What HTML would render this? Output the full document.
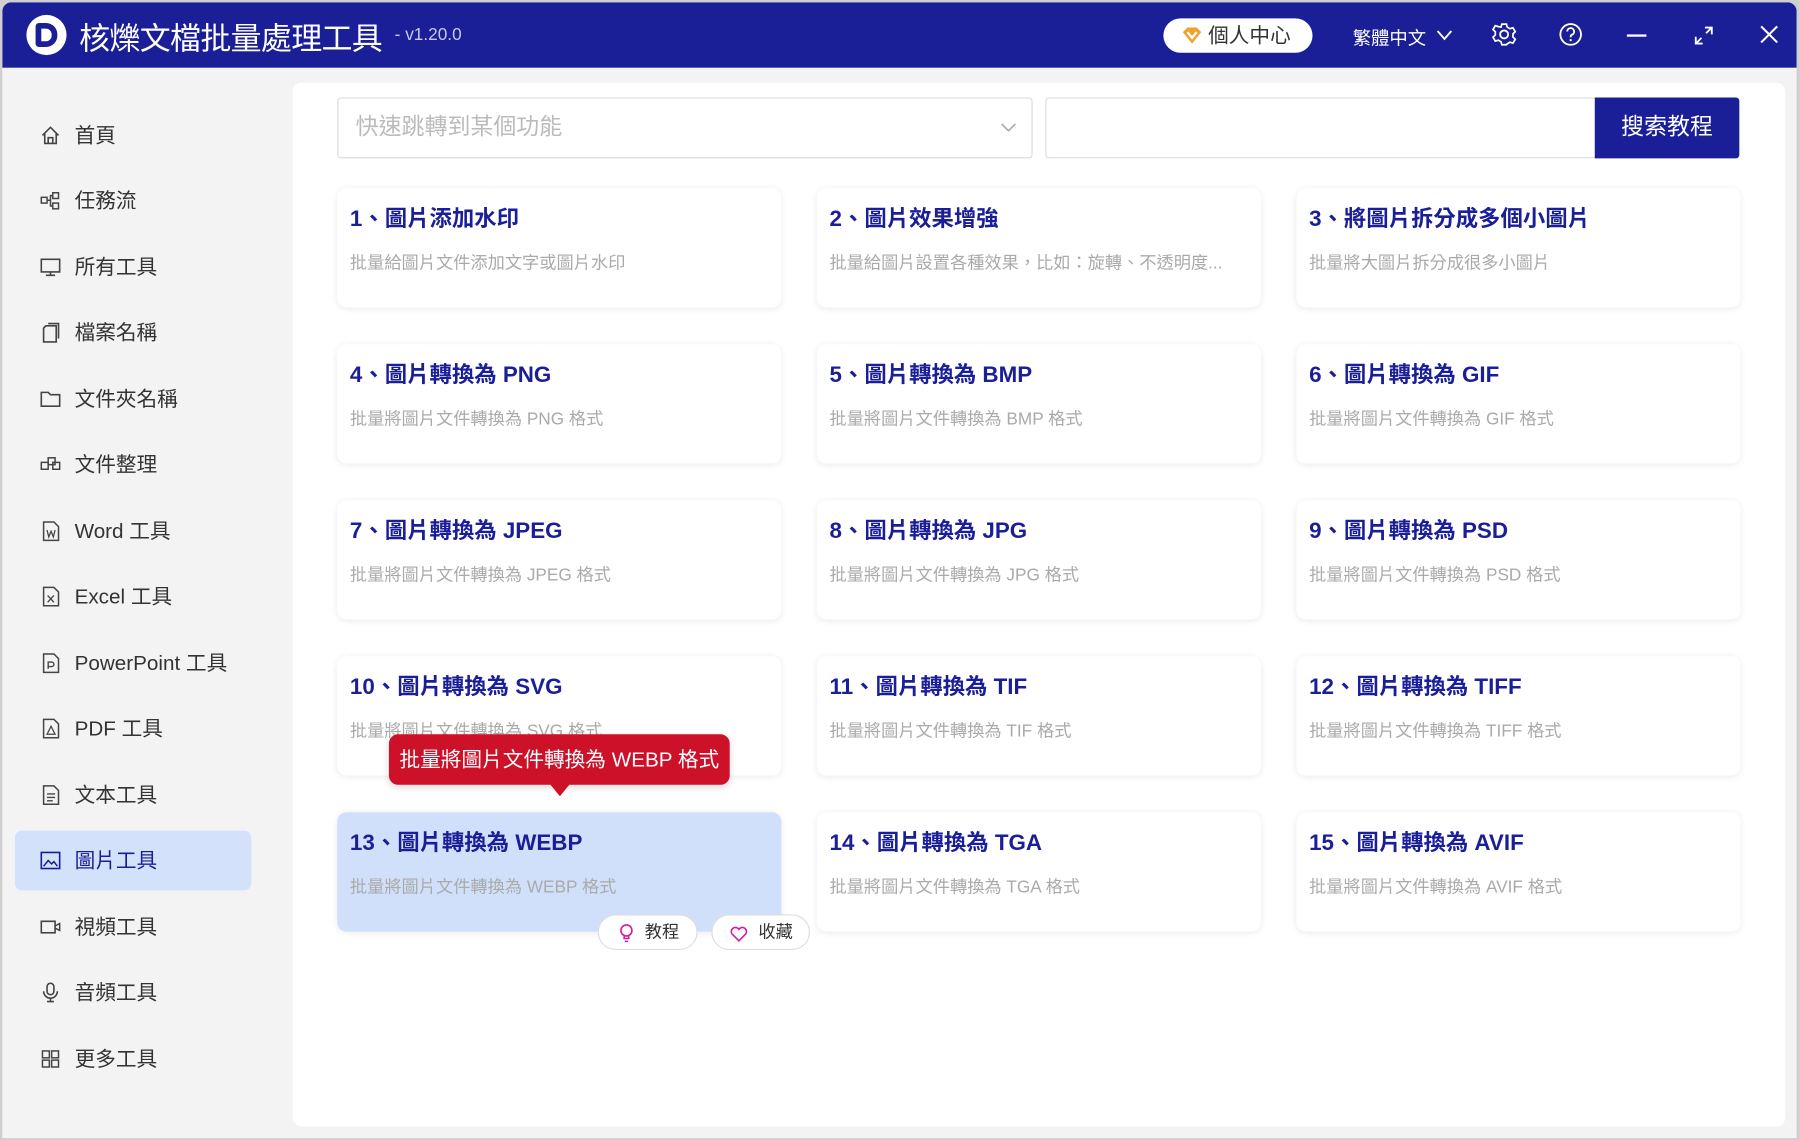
<!DOCTYPE html>
<html><head><meta charset="utf-8"><style>
*{margin:0;padding:0;box-sizing:border-box}
html,body{width:1799px;height:1140px;overflow:hidden;background:#6b6b6b}
#s{position:absolute;left:0;top:0;width:1568px;height:994px;transform:scale(1.14732);transform-origin:0 0;font-family:"Liberation Sans","Noto Sans CJK TC",sans-serif;background:#cfcfcf}
.win{position:absolute;left:2px;top:2px;width:1564px;height:990px;background:#f3f3f3;border-radius:8px 8px 0 0;overflow:hidden}
.hdr{position:absolute;left:0;top:0;width:100%;height:57px;background:#1a1e97;color:#fff}
.abs{position:absolute}
.side{position:absolute;left:0;top:57px;width:253px;bottom:0}
.it{position:absolute;left:11px;width:206px;height:52px;border-radius:6px;font-size:18px;color:#333;line-height:52px;padding-left:52px}
.it svg{position:absolute;left:22px;top:17px}
.it.on{background:#d3e1fa;color:#1a1e97}
.main{position:absolute;left:253px;top:70px;width:1301px;height:910px;background:#fff;border-radius:8px}
.card{position:absolute;width:387px;height:104px;background:#fff;border-radius:8px;box-shadow:0 1px 6px rgba(0,0,0,.08)}
.card b{position:absolute;left:11px;top:10px;font-size:19.5px;color:#1a1e97;font-weight:bold;white-space:nowrap}
.card p{position:absolute;left:11px;top:54px;font-size:15px;color:#aaa;white-space:nowrap}
.pill{position:absolute;height:31px;border:1px solid #ddd;border-radius:16px;background:#fff;font-size:15px;color:#333;line-height:29px}
</style></head><body><div id="s"><div class="win">
<div class="hdr">
 <div class="abs" style="left:21px;top:11px;width:35px;height:35px;border-radius:50%;background:#fff"></div>
 <div class="abs" style="left:29px;top:18px;width:19px;height:21px;border:5px solid #1a1e97;border-radius:3px 10px 10px 3px"></div>
 <div class="abs" style="left:67px;top:10px;font-size:27px;white-space:nowrap;letter-spacing:-0.6px">核爍文檔批量處理工具</div>
 <div class="abs" style="left:342px;top:20px;font-size:15px;color:#c8cae8">- v1.20.0</div>
 <div class="abs" style="left:1012px;top:14px;width:130px;height:30px;background:#fff;border-radius:15px;color:#333;font-size:18px;line-height:30px;padding-left:39px">個人中心</div>
 <svg class="abs" style="left:1028px;top:21px" width="18" height="16" viewBox="0 0 18 16"><path d="M1 5L5 1H13L17 5L9 15Z" fill="#f2a12a"/><path d="M5 5L9 10L13 5" stroke="#fff" stroke-width="2" fill="none"/></svg>
 <div class="abs" style="left:1177px;top:18px;font-size:16px">繁體中文</div>
 <svg class="abs" style="left:1250px;top:24px" width="14" height="10"><path d="M1 1L7 8L13 1" stroke="#fff" stroke-width="1.6" fill="none"/></svg>
 <svg class="abs" style="left:1298px;top:17px" width="22" height="22" viewBox="0 0 22 22"><circle cx="11" cy="11" r="3.5" stroke="#fff" stroke-width="1.6" fill="none"/><path d="M9 2h4l.7 2.6 2.4 1.4 2.6-.8 2 3.4-2 1.9v2.8l2 1.9-2 3.4-2.6-.8-2.4 1.4L13 20H9l-.7-2.6-2.4-1.4-2.6.8-2-3.4 2-1.9V8.7l-2-1.9 2-3.4 2.6.8L8.3 4.6Z" stroke="#fff" stroke-width="1.5" fill="none"/></svg>
 <svg class="abs" style="left:1356px;top:17px" width="22" height="22"><circle cx="11" cy="11" r="9" stroke="#fff" stroke-width="1.6" fill="none"/><path d="M8 8.5a3 3 0 1 1 4 2.8c-1 .4-1 1-1 2.2" stroke="#fff" stroke-width="1.6" fill="none"/><circle cx="11" cy="16" r="1" fill="#fff"/></svg>
 <div class="abs" style="left:1416px;top:28px;width:17px;height:2px;background:#fff"></div>
 <svg class="abs" style="left:1474px;top:20px" width="18" height="18"><path d="M10 2h6v6M16 2l-5 5M8 16H2v-6M2 16l5-5" stroke="#fff" stroke-width="1.6" fill="none"/></svg>
 <svg class="abs" style="left:1531px;top:19px" width="18" height="18"><path d="M2 2L16 16M16 2L2 16" stroke="#fff" stroke-width="1.8"/></svg>
</div>
<div class="side">
 <div class="it" style="top:33px"><svg width="18" height="18"><path d="M2 9L9 2L16 9M4 7V16H14V7M7 16V11H11V16" stroke="#444" stroke-width="1.4" fill="none"/></svg>首頁</div>
 <div class="it" style="top:90px"><svg width="18" height="18"><rect x="1" y="6" width="5" height="5" stroke="#444" fill="none" stroke-width="1.3"/><rect x="11" y="2" width="5" height="5" stroke="#444" fill="none" stroke-width="1.3"/><rect x="11" y="11" width="5" height="5" stroke="#444" fill="none" stroke-width="1.3"/><path d="M6 8.5H9V4.5H11M9 8.5V13.5H11" stroke="#444" fill="none" stroke-width="1.3"/></svg>任務流</div>
 <div class="it" style="top:148px"><svg width="18" height="18"><rect x="1" y="2" width="16" height="11" stroke="#444" fill="none" stroke-width="1.4"/><path d="M5 16H13M9 13V16" stroke="#444" stroke-width="1.4"/></svg>所有工具</div>
 <div class="it" style="top:205px"><svg width="18" height="18"><path d="M5 3H14V17H3V5ZM7 1H16V14" stroke="#444" fill="none" stroke-width="1.4"/></svg>檔案名稱</div>
 <div class="it" style="top:263px"><svg width="18" height="18"><path d="M1 3H7L9 5H17V15H1Z" stroke="#444" fill="none" stroke-width="1.4"/></svg>文件夾名稱</div>
 <div class="it" style="top:320px"><svg width="18" height="18"><rect x="1" y="7" width="6" height="6" stroke="#444" fill="none" stroke-width="1.3"/><rect x="7" y="3" width="6" height="6" stroke="#444" fill="none" stroke-width="1.3"/><rect x="11" y="7" width="6" height="6" stroke="#444" fill="none" stroke-width="1.3"/></svg>文件整理</div>
 <div class="it" style="top:378px"><svg width="18" height="18"><path d="M3 1H12L16 5V17H3Z" stroke="#444" fill="none" stroke-width="1.3"/><path d="M6 8L7.5 14L9.5 9L11.5 14L13 8" stroke="#444" fill="none" stroke-width="1.1"/></svg>Word 工具</div>
 <div class="it" style="top:435px"><svg width="18" height="18"><path d="M3 1H12L16 5V17H3Z" stroke="#444" fill="none" stroke-width="1.3"/><path d="M6.5 8L12 14M12 8L6.5 14" stroke="#444" stroke-width="1.2"/></svg>Excel 工具</div>
 <div class="it" style="top:493px"><svg width="18" height="18"><path d="M3 1H12L16 5V17H3Z" stroke="#444" fill="none" stroke-width="1.3"/><path d="M7 14V8H10a2 2 0 0 1 0 4H7" stroke="#444" fill="none" stroke-width="1.2"/></svg>PowerPoint 工具</div>
 <div class="it" style="top:550px"><svg width="18" height="18"><path d="M3 1H12L16 5V17H3Z" stroke="#444" fill="none" stroke-width="1.3"/><path d="M6 14L9.5 7L13 14Z" stroke="#444" fill="none" stroke-width="1.1"/></svg>PDF 工具</div>
 <div class="it" style="top:608px"><svg width="18" height="18"><path d="M3 1H12L16 5V17H3Z" stroke="#444" fill="none" stroke-width="1.3"/><path d="M6 8H13M6 11H13M6 14H11" stroke="#444" stroke-width="1.2"/></svg>文本工具</div>
 <div class="it on" style="top:665px"><svg width="18" height="18"><rect x="1" y="2" width="16" height="14" stroke="#1a1e97" fill="none" stroke-width="1.4"/><path d="M3 14L7 9L10 12L12 10L15 14" stroke="#1a1e97" fill="none" stroke-width="1.3"/></svg>圖片工具</div>
 <div class="it" style="top:723px"><svg width="18" height="18"><rect x="1" y="4" width="12" height="10" stroke="#444" fill="none" stroke-width="1.4"/><path d="M13 8L17 6V12L13 10" stroke="#444" fill="none" stroke-width="1.3"/></svg>視頻工具</div>
 <div class="it" style="top:780px"><svg width="18" height="18"><rect x="6" y="1" width="6" height="10" rx="3" stroke="#444" fill="none" stroke-width="1.4"/><path d="M3 8a6 6 0 0 0 12 0M9 14V17M6 17H12" stroke="#444" fill="none" stroke-width="1.4"/></svg>音頻工具</div>
 <div class="it" style="top:838px"><svg width="18" height="18"><rect x="2" y="2" width="6" height="6" stroke="#444" fill="none" stroke-width="1.3"/><rect x="10" y="2" width="6" height="6" stroke="#444" fill="none" stroke-width="1.3"/><rect x="2" y="10" width="6" height="6" stroke="#444" fill="none" stroke-width="1.3"/><rect x="10" y="10" width="6" height="6" stroke="#444" fill="none" stroke-width="1.3"/></svg>更多工具</div>
</div>
<div class="main">
 <div class="abs" style="left:39px;top:13px;width:606px;height:53px;border:1px solid #dcdcdc;border-radius:3px;font-size:20px;color:#bbb;line-height:51px;padding-left:15px">快速跳轉到某個功能</div>
 <svg class="abs" style="left:617px;top:35px" width="14" height="9"><path d="M1 1L7 7L13 1" stroke="#aaa" stroke-width="1.4" fill="none"/></svg>
 <div class="abs" style="left:656px;top:13px;width:480px;height:53px;border:1px solid #dcdcdc;border-right:none;border-radius:3px 0 0 3px"></div>
 <div class="abs" style="left:1135px;top:13px;width:126px;height:53px;background:#1a1e97;border-radius:0 3px 3px 0;color:#fff;font-size:20px;line-height:53px;text-align:center">搜索教程</div>

 <div class="card" style="left:39px;top:92px"><b>1、圖片添加水印</b><p>批量給圖片文件添加文字或圖片水印</p></div>
 <div class="card" style="left:457px;top:92px"><b>2、圖片效果增強</b><p>批量給圖片設置各種效果，比如：旋轉、不透明度...</p></div>
 <div class="card" style="left:875px;top:92px"><b>3、將圖片拆分成多個小圖片</b><p>批量將大圖片拆分成很多小圖片</p></div>
 <div class="card" style="left:39px;top:228px"><b>4、圖片轉換為 PNG</b><p>批量將圖片文件轉換為 PNG 格式</p></div>
 <div class="card" style="left:457px;top:228px"><b>5、圖片轉換為 BMP</b><p>批量將圖片文件轉換為 BMP 格式</p></div>
 <div class="card" style="left:875px;top:228px"><b>6、圖片轉換為 GIF</b><p>批量將圖片文件轉換為 GIF 格式</p></div>
 <div class="card" style="left:39px;top:364px"><b>7、圖片轉換為 JPEG</b><p>批量將圖片文件轉換為 JPEG 格式</p></div>
 <div class="card" style="left:457px;top:364px"><b>8、圖片轉換為 JPG</b><p>批量將圖片文件轉換為 JPG 格式</p></div>
 <div class="card" style="left:875px;top:364px"><b>9、圖片轉換為 PSD</b><p>批量將圖片文件轉換為 PSD 格式</p></div>
 <div class="card" style="left:39px;top:500px"><b>10、圖片轉換為 SVG</b><p>批量將圖片文件轉換為 SVG 格式</p></div>
 <div class="card" style="left:457px;top:500px"><b>11、圖片轉換為 TIF</b><p>批量將圖片文件轉換為 TIF 格式</p></div>
 <div class="card" style="left:875px;top:500px"><b>12、圖片轉換為 TIFF</b><p>批量將圖片文件轉換為 TIFF 格式</p></div>
 <div class="card" style="left:39px;top:636px;background:#d0e0fa"><b>13、圖片轉換為 WEBP</b><p>批量將圖片文件轉換為 WEBP 格式</p></div>
 <div class="card" style="left:457px;top:636px"><b>14、圖片轉換為 TGA</b><p>批量將圖片文件轉換為 TGA 格式</p></div>
 <div class="card" style="left:875px;top:636px"><b>15、圖片轉換為 AVIF</b><p>批量將圖片文件轉換為 AVIF 格式</p></div>

 <div class="abs" style="left:84px;top:568px;width:297px;height:44px;background:#cc1129;border-radius:8px;color:#fff;font-size:18px;line-height:44px;text-align:center;box-shadow:0 2px 6px rgba(0,0,0,.15)">批量將圖片文件轉換為 WEBP 格式</div>
 <div class="abs" style="left:224px;top:611px;width:0;height:0;border-left:9px solid transparent;border-right:9px solid transparent;border-top:11px solid #cc1129"></div>

 <div class="pill" style="left:266px;top:725px;width:87px;padding-left:40px">教程</div>
 <svg class="abs" style="left:285px;top:733px" width="12" height="17"><circle cx="6" cy="6" r="4.8" stroke="#d21aa6" stroke-width="1.4" fill="none"/><path d="M4 11V13H8V11M4.5 15.5H7.5" stroke="#d21aa6" stroke-width="1.4" fill="none"/></svg>
 <div class="pill" style="left:365px;top:725px;width:86px;padding-left:40px">收藏</div>
 <svg class="abs" style="left:381px;top:735px" width="16" height="14"><path d="M8 13L2 7A3.3 3.3 0 0 1 8 3A3.3 3.3 0 0 1 14 7Z" stroke="#d21aa6" stroke-width="1.4" fill="none"/></svg>
</div>
</div></div></body></html>
